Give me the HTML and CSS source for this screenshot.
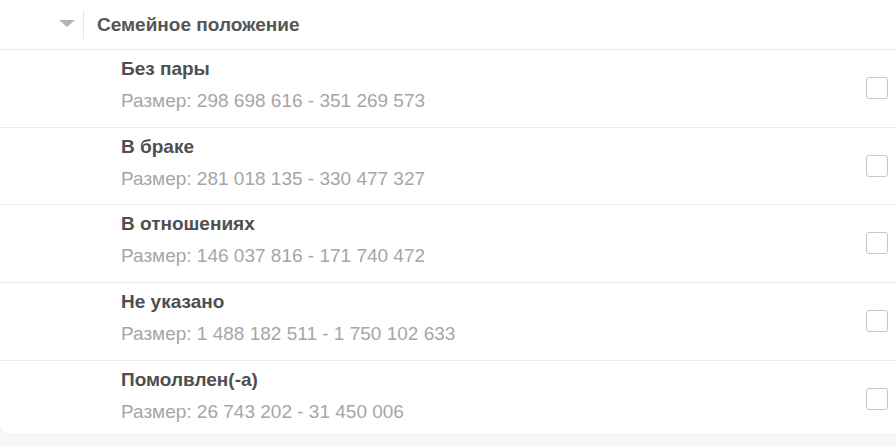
FILE: index.html
```html
<!DOCTYPE html>
<html lang="ru">

<head>
    <meta charset="UTF-8">
    <meta name="viewport" content="width=device-width, initial-scale=1.0">
    <link rel="stylesheet" href="styles.css">
</head>

<body>
    <div class="panel">
        <div class="panel-header">
            <span class="caret"></span>
            <span class="header-sep"></span>
            <span class="header-title">Семейное положение</span>
        </div>

        <div class="option">
            <div class="option-text">
                <div class="option-name">Без пары</div>
                <div class="option-size">Размер: 298 698 616 - 351 269 573</div>
            </div>
            <span class="checkbox"></span>
        </div>

        <div class="option">
            <div class="option-text">
                <div class="option-name">В браке</div>
                <div class="option-size">Размер: 281 018 135 - 330 477 327</div>
            </div>
            <span class="checkbox"></span>
        </div>

        <div class="option">
            <div class="option-text">
                <div class="option-name">В отношениях</div>
                <div class="option-size">Размер: 146 037 816 - 171 740 472</div>
            </div>
            <span class="checkbox"></span>
        </div>

        <div class="option">
            <div class="option-text">
                <div class="option-name">Не указано</div>
                <div class="option-size">Размер: 1 488 182 511 - 1 750 102 633</div>
            </div>
            <span class="checkbox"></span>
        </div>

        <div class="option">
            <div class="option-text">
                <div class="option-name">Помолвлен(-а)</div>
                <div class="option-size">Размер: 26 743 202 - 31 450 006</div>
            </div>
            <span class="checkbox"></span>
        </div>
    </div>
</body>

</html>
```

FILE: styles.css
```css
body {
    margin: 0;
    background-color: #f7f7f7;
    font-family: "Liberation Sans", Arial, sans-serif;
    overflow: hidden;
}

.panel {
    width: 906px;
    background-color: #fff;
    border-radius: 0 0 8px 8px;
    box-shadow: 0 2px 10px rgba(0, 0, 0, 0.08);
}

.panel-header {
    display: flex;
    align-items: center;
    box-sizing: border-box;
    height: 50px;
    padding-top: 1px;
    border-bottom: 1px solid #ebebeb;
}

.caret {
    width: 0;
    height: 0;
    margin-left: 59px;
    margin-top: -4px;
    border-left: 8px solid transparent;
    border-right: 8px solid transparent;
    border-top: 7px solid #b3b3b3;
}

.header-sep {
    width: 1px;
    height: 28px;
    margin-left: 8px;
    margin-top: -1px;
    background-color: #e6e6e6;
}

.header-title {
    margin-left: 13px;
    font-size: 19px;
    line-height: 22px;
    font-weight: bold;
    color: #555;
}

.option {
    display: flex;
    box-sizing: border-box;
    height: 77.7px;
    border-bottom: 1px solid #ebebeb;
}

.option:last-child {
    height: 72px;
    border-bottom: none;
}

.option-text {
    flex: 1;
    padding-left: 121px;
    padding-top: 8px;
}

.option-name {
    font-size: 19px;
    line-height: 22px;
    font-weight: bold;
    color: #4f4f4f;
    margin-bottom: 10px;
}

.option-size {
    font-size: 19px;
    line-height: 22px;
    color: #a6a6a6;
}

.checkbox {
    width: 20px;
    height: 20px;
    margin-top: 27px;
    margin-right: 18px;
    border: 1px solid #c5c5ca;
    border-radius: 3px;
}
```
